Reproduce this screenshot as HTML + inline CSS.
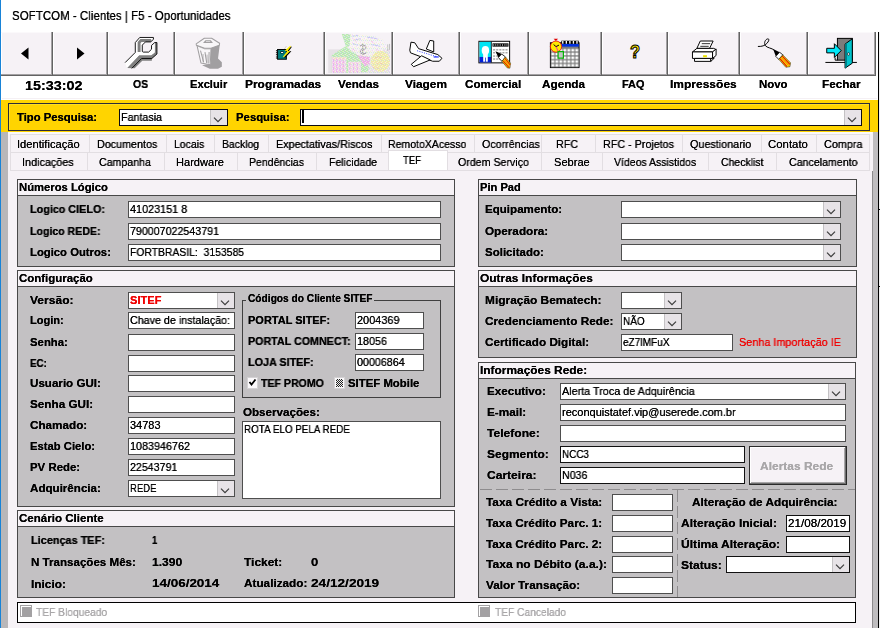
<!DOCTYPE html><html><head><meta charset="utf-8"><title>SOFTCOM</title><style>
html,body{margin:0;padding:0;background:#fff;}
body{width:880px;height:628px;position:relative;overflow:hidden;font-family:"Liberation Sans",sans-serif;}
div,svg,span{position:absolute;}
span{will-change:transform;text-shadow:0 0 0 currentColor;white-space:pre;line-height:14px;height:14px;transform-origin:0 50%;}
.b{font-weight:bold;}
</style></head><body>
<div style="left:0px;top:0px;width:1px;height:628px;background:#1883d7;"></div>
<div style="left:1px;top:32px;width:52px;height:44px;background:#f6f2f6;"></div>
<div style="left:1px;top:32px;width:1px;height:42px;background:#fff;"></div>
<div style="left:1px;top:32px;width:50px;height:1px;background:#fbf9fb;"></div>
<div style="left:51px;top:32px;width:1px;height:44px;background:#a3a1a3;"></div>
<div style="left:52px;top:32px;width:1px;height:44px;background:#636363;"></div>
<div style="left:1px;top:74px;width:51px;height:1px;background:#a3a1a3;"></div>
<div style="left:1px;top:75px;width:52px;height:1px;background:#636363;"></div>
<div style="left:53px;top:32px;width:55px;height:44px;background:#f6f2f6;"></div>
<div style="left:53px;top:32px;width:1px;height:42px;background:#fff;"></div>
<div style="left:53px;top:32px;width:53px;height:1px;background:#fbf9fb;"></div>
<div style="left:106px;top:32px;width:1px;height:44px;background:#a3a1a3;"></div>
<div style="left:107px;top:32px;width:1px;height:44px;background:#636363;"></div>
<div style="left:53px;top:74px;width:54px;height:1px;background:#a3a1a3;"></div>
<div style="left:53px;top:75px;width:55px;height:1px;background:#636363;"></div>
<div style="left:108px;top:32px;width:67px;height:44px;background:#f6f2f6;"></div>
<div style="left:108px;top:32px;width:1px;height:42px;background:#fff;"></div>
<div style="left:108px;top:32px;width:65px;height:1px;background:#fbf9fb;"></div>
<div style="left:173px;top:32px;width:1px;height:44px;background:#a3a1a3;"></div>
<div style="left:174px;top:32px;width:1px;height:44px;background:#636363;"></div>
<div style="left:108px;top:74px;width:66px;height:1px;background:#a3a1a3;"></div>
<div style="left:108px;top:75px;width:67px;height:1px;background:#636363;"></div>
<div style="left:175px;top:32px;width:69px;height:44px;background:#f6f2f6;"></div>
<div style="left:175px;top:32px;width:1px;height:42px;background:#fff;"></div>
<div style="left:175px;top:32px;width:67px;height:1px;background:#fbf9fb;"></div>
<div style="left:242px;top:32px;width:1px;height:44px;background:#a3a1a3;"></div>
<div style="left:243px;top:32px;width:1px;height:44px;background:#636363;"></div>
<div style="left:175px;top:74px;width:68px;height:1px;background:#a3a1a3;"></div>
<div style="left:175px;top:75px;width:69px;height:1px;background:#636363;"></div>
<div style="left:244px;top:32px;width:81px;height:44px;background:#f6f2f6;"></div>
<div style="left:244px;top:32px;width:1px;height:42px;background:#fff;"></div>
<div style="left:244px;top:32px;width:79px;height:1px;background:#fbf9fb;"></div>
<div style="left:323px;top:32px;width:1px;height:44px;background:#a3a1a3;"></div>
<div style="left:324px;top:32px;width:1px;height:44px;background:#636363;"></div>
<div style="left:244px;top:74px;width:80px;height:1px;background:#a3a1a3;"></div>
<div style="left:244px;top:75px;width:81px;height:1px;background:#636363;"></div>
<div style="left:325px;top:32px;width:68px;height:44px;background:#f6f2f6;"></div>
<div style="left:325px;top:32px;width:1px;height:42px;background:#fff;"></div>
<div style="left:325px;top:32px;width:66px;height:1px;background:#fbf9fb;"></div>
<div style="left:391px;top:32px;width:1px;height:44px;background:#a3a1a3;"></div>
<div style="left:392px;top:32px;width:1px;height:44px;background:#636363;"></div>
<div style="left:325px;top:74px;width:67px;height:1px;background:#a3a1a3;"></div>
<div style="left:325px;top:75px;width:68px;height:1px;background:#636363;"></div>
<div style="left:393px;top:32px;width:67px;height:44px;background:#f6f2f6;"></div>
<div style="left:393px;top:32px;width:1px;height:42px;background:#fff;"></div>
<div style="left:393px;top:32px;width:65px;height:1px;background:#fbf9fb;"></div>
<div style="left:458px;top:32px;width:1px;height:44px;background:#a3a1a3;"></div>
<div style="left:459px;top:32px;width:1px;height:44px;background:#636363;"></div>
<div style="left:393px;top:74px;width:66px;height:1px;background:#a3a1a3;"></div>
<div style="left:393px;top:75px;width:67px;height:1px;background:#636363;"></div>
<div style="left:460px;top:32px;width:69px;height:44px;background:#f6f2f6;"></div>
<div style="left:460px;top:32px;width:1px;height:42px;background:#fff;"></div>
<div style="left:460px;top:32px;width:67px;height:1px;background:#fbf9fb;"></div>
<div style="left:527px;top:32px;width:1px;height:44px;background:#a3a1a3;"></div>
<div style="left:528px;top:32px;width:1px;height:44px;background:#636363;"></div>
<div style="left:460px;top:74px;width:68px;height:1px;background:#a3a1a3;"></div>
<div style="left:460px;top:75px;width:69px;height:1px;background:#636363;"></div>
<div style="left:529px;top:32px;width:73px;height:44px;background:#f6f2f6;"></div>
<div style="left:529px;top:32px;width:1px;height:42px;background:#fff;"></div>
<div style="left:529px;top:32px;width:71px;height:1px;background:#fbf9fb;"></div>
<div style="left:600px;top:32px;width:1px;height:44px;background:#a3a1a3;"></div>
<div style="left:601px;top:32px;width:1px;height:44px;background:#636363;"></div>
<div style="left:529px;top:74px;width:72px;height:1px;background:#a3a1a3;"></div>
<div style="left:529px;top:75px;width:73px;height:1px;background:#636363;"></div>
<div style="left:602px;top:32px;width:66px;height:44px;background:#f6f2f6;"></div>
<div style="left:602px;top:32px;width:1px;height:42px;background:#fff;"></div>
<div style="left:602px;top:32px;width:64px;height:1px;background:#fbf9fb;"></div>
<div style="left:666px;top:32px;width:1px;height:44px;background:#a3a1a3;"></div>
<div style="left:667px;top:32px;width:1px;height:44px;background:#636363;"></div>
<div style="left:602px;top:74px;width:65px;height:1px;background:#a3a1a3;"></div>
<div style="left:602px;top:75px;width:66px;height:1px;background:#636363;"></div>
<div style="left:668px;top:32px;width:72px;height:44px;background:#f6f2f6;"></div>
<div style="left:668px;top:32px;width:1px;height:42px;background:#fff;"></div>
<div style="left:668px;top:32px;width:70px;height:1px;background:#fbf9fb;"></div>
<div style="left:738px;top:32px;width:1px;height:44px;background:#a3a1a3;"></div>
<div style="left:739px;top:32px;width:1px;height:44px;background:#636363;"></div>
<div style="left:668px;top:74px;width:71px;height:1px;background:#a3a1a3;"></div>
<div style="left:668px;top:75px;width:72px;height:1px;background:#636363;"></div>
<div style="left:740px;top:32px;width:68px;height:44px;background:#f6f2f6;"></div>
<div style="left:740px;top:32px;width:1px;height:42px;background:#fff;"></div>
<div style="left:740px;top:32px;width:66px;height:1px;background:#fbf9fb;"></div>
<div style="left:806px;top:32px;width:1px;height:44px;background:#a3a1a3;"></div>
<div style="left:807px;top:32px;width:1px;height:44px;background:#636363;"></div>
<div style="left:740px;top:74px;width:67px;height:1px;background:#a3a1a3;"></div>
<div style="left:740px;top:75px;width:68px;height:1px;background:#636363;"></div>
<div style="left:808px;top:32px;width:68px;height:44px;background:#f6f2f6;"></div>
<div style="left:808px;top:32px;width:1px;height:42px;background:#fff;"></div>
<div style="left:808px;top:32px;width:66px;height:1px;background:#fbf9fb;"></div>
<div style="left:874px;top:32px;width:1px;height:44px;background:#a3a1a3;"></div>
<div style="left:875px;top:32px;width:1px;height:44px;background:#636363;"></div>
<div style="left:808px;top:74px;width:67px;height:1px;background:#a3a1a3;"></div>
<div style="left:808px;top:75px;width:68px;height:1px;background:#636363;"></div>
<div style="left:878px;top:32px;width:1px;height:596px;background:#000;"></div>
<div style="left:879px;top:32px;width:1px;height:596px;background:#f0f0f0;"></div>
<div style="left:879px;top:209px;width:1px;height:1px;background:#000;"></div>
<div style="left:879px;top:286px;width:1px;height:1px;background:#000;"></div>
<div style="left:2px;top:98px;width:875px;height:1px;background:#f4f0f4;"></div>
<div style="left:1px;top:100px;width:877px;height:32px;background:#ffd400;"></div>
<div style="left:8px;top:103px;width:862px;height:28px;border:1px solid #2c2c38;box-sizing:border-box;"></div>
<div style="left:9px;top:104px;width:860px;height:1px;background:#ffdf20;"></div>
<div style="left:9px;top:104px;width:1px;height:26px;background:#ffdf20;"></div>
<div style="left:119px;top:109px;width:109px;height:17px;background:#fff;border:1px solid #0c0c14;box-sizing:border-box;"></div>
<div style="left:210px;top:110px;width:17px;height:15px;background:#e7e3e7;"></div>
<div style="left:210px;top:110px;width:1px;height:15px;background:#c4c2c4;"></div>
<svg style="left:210px;top:110px" width="17" height="15"><path d="M4 7.7 L8 11.7 L12 7.7" fill="none" stroke="#3c3c3c" stroke-width="1.2"/></svg>
<div style="left:300px;top:109px;width:562px;height:17px;background:#fff;border:1px solid #0c0c14;box-sizing:border-box;"></div>
<div style="left:844px;top:110px;width:17px;height:15px;background:#e7e3e7;"></div>
<div style="left:844px;top:110px;width:1px;height:15px;background:#c4c2c4;"></div>
<svg style="left:844px;top:110px" width="17" height="15"><path d="M4 7.7 L8 11.7 L12 7.7" fill="none" stroke="#3c3c3c" stroke-width="1.2"/></svg>
<div style="left:302px;top:110px;width:2px;height:13px;background:#000;"></div>
<div style="left:1px;top:132px;width:7px;height:496px;background:#b9b7b9;"></div>
<div style="left:8px;top:132px;width:865px;height:496px;background:#f6f2f6;"></div>
<div style="left:873px;top:132px;width:5px;height:496px;background:#bfbdbf;"></div>
<div style="left:872px;top:171px;width:1px;height:457px;background:#8c8a8c;"></div>
<div style="left:8px;top:132px;width:864px;height:2px;background:#fbfafb;"></div>
<div style="left:10px;top:134px;width:860px;height:1px;background:#e2dee2;"></div>
<div style="left:10px;top:152px;width:860px;height:1px;background:#e2dee2;"></div>
<div style="left:10px;top:170px;width:860px;height:1px;background:#e2dee2;"></div>
<div style="left:10px;top:134px;width:1px;height:18px;background:#e2dee2;"></div>
<div style="left:89px;top:134px;width:1px;height:18px;background:#e2dee2;"></div>
<div style="left:166px;top:134px;width:1px;height:18px;background:#e2dee2;"></div>
<div style="left:214px;top:134px;width:1px;height:18px;background:#e2dee2;"></div>
<div style="left:268px;top:134px;width:1px;height:18px;background:#e2dee2;"></div>
<div style="left:381px;top:134px;width:1px;height:18px;background:#e2dee2;"></div>
<div style="left:474px;top:134px;width:1px;height:18px;background:#e2dee2;"></div>
<div style="left:541px;top:134px;width:1px;height:18px;background:#e2dee2;"></div>
<div style="left:595px;top:134px;width:1px;height:18px;background:#e2dee2;"></div>
<div style="left:682px;top:134px;width:1px;height:18px;background:#e2dee2;"></div>
<div style="left:761px;top:134px;width:1px;height:18px;background:#e2dee2;"></div>
<div style="left:816px;top:134px;width:1px;height:18px;background:#e2dee2;"></div>
<div style="left:869px;top:134px;width:1px;height:18px;background:#e2dee2;"></div>
<div style="left:10px;top:152px;width:1px;height:18px;background:#e2dee2;"></div>
<div style="left:87px;top:152px;width:1px;height:18px;background:#e2dee2;"></div>
<div style="left:164px;top:152px;width:1px;height:18px;background:#e2dee2;"></div>
<div style="left:237px;top:152px;width:1px;height:18px;background:#e2dee2;"></div>
<div style="left:316px;top:152px;width:1px;height:18px;background:#e2dee2;"></div>
<div style="left:388px;top:152px;width:1px;height:18px;background:#e2dee2;"></div>
<div style="left:447px;top:152px;width:1px;height:18px;background:#e2dee2;"></div>
<div style="left:541px;top:152px;width:1px;height:18px;background:#e2dee2;"></div>
<div style="left:602px;top:152px;width:1px;height:18px;background:#e2dee2;"></div>
<div style="left:708px;top:152px;width:1px;height:18px;background:#e2dee2;"></div>
<div style="left:776px;top:152px;width:1px;height:18px;background:#e2dee2;"></div>
<div style="left:869px;top:152px;width:1px;height:18px;background:#e2dee2;"></div>
<div style="left:388px;top:150px;width:60px;height:20px;background:#fff;"></div>
<div style="left:388px;top:150px;width:1px;height:20px;background:#e2dee2;"></div>
<div style="left:447px;top:150px;width:1px;height:20px;background:#e2dee2;"></div>
<div style="left:388px;top:150px;width:60px;height:1px;background:#e2dee2;"></div>
<div style="left:17px;top:179px;width:438px;height:88px;background:#c3c1c3;border:1px solid #484848;box-sizing:border-box;"></div>
<div style="left:18px;top:180px;width:436px;height:15px;background:#f6f2f6;"></div>
<div style="left:17px;top:195px;width:438px;height:1px;background:#484848;"></div>
<div style="left:128px;top:201px;width:313px;height:17px;background:#fff;border:1px solid #4e4e4e;box-sizing:border-box;"></div>
<div style="left:128px;top:223px;width:313px;height:17px;background:#fff;border:1px solid #4e4e4e;box-sizing:border-box;"></div>
<div style="left:128px;top:244px;width:313px;height:17px;background:#fff;border:1px solid #4e4e4e;box-sizing:border-box;"></div>
<div style="left:478px;top:179px;width:379px;height:88px;background:#c3c1c3;border:1px solid #484848;box-sizing:border-box;"></div>
<div style="left:479px;top:180px;width:377px;height:15px;background:#f6f2f6;"></div>
<div style="left:478px;top:195px;width:379px;height:1px;background:#484848;"></div>
<div style="left:621px;top:201px;width:220px;height:17px;background:#fff;border:1px solid #4e4e4e;box-sizing:border-box;"></div>
<div style="left:823px;top:202px;width:17px;height:15px;background:#e7e3e7;"></div>
<div style="left:823px;top:202px;width:1px;height:15px;background:#c4c2c4;"></div>
<svg style="left:823px;top:202px" width="17" height="15"><path d="M4 7.7 L8 11.7 L12 7.7" fill="none" stroke="#3c3c3c" stroke-width="1.2"/></svg>
<div style="left:621px;top:223px;width:220px;height:17px;background:#fff;border:1px solid #4e4e4e;box-sizing:border-box;"></div>
<div style="left:823px;top:224px;width:17px;height:15px;background:#e7e3e7;"></div>
<div style="left:823px;top:224px;width:1px;height:15px;background:#c4c2c4;"></div>
<svg style="left:823px;top:224px" width="17" height="15"><path d="M4 7.7 L8 11.7 L12 7.7" fill="none" stroke="#3c3c3c" stroke-width="1.2"/></svg>
<div style="left:621px;top:244px;width:220px;height:17px;background:#fff;border:1px solid #4e4e4e;box-sizing:border-box;"></div>
<div style="left:823px;top:245px;width:17px;height:15px;background:#e7e3e7;"></div>
<div style="left:823px;top:245px;width:1px;height:15px;background:#c4c2c4;"></div>
<svg style="left:823px;top:245px" width="17" height="15"><path d="M4 7.7 L8 11.7 L12 7.7" fill="none" stroke="#3c3c3c" stroke-width="1.2"/></svg>
<div style="left:17px;top:270px;width:438px;height:237px;background:#c3c1c3;border:1px solid #484848;box-sizing:border-box;"></div>
<div style="left:18px;top:271px;width:436px;height:15px;background:#f6f2f6;"></div>
<div style="left:17px;top:286px;width:438px;height:1px;background:#484848;"></div>
<div style="left:128px;top:292px;width:107px;height:17px;background:#fff;border:1px solid #4e4e4e;box-sizing:border-box;"></div>
<div style="left:217px;top:293px;width:17px;height:15px;background:#e7e3e7;"></div>
<div style="left:217px;top:293px;width:1px;height:15px;background:#c4c2c4;"></div>
<svg style="left:217px;top:293px" width="17" height="15"><path d="M4 7.7 L8 11.7 L12 7.7" fill="none" stroke="#3c3c3c" stroke-width="1.2"/></svg>
<div style="left:128px;top:312px;width:107px;height:17px;background:#fff;border:1px solid #4e4e4e;box-sizing:border-box;"></div>
<div style="left:128px;top:334px;width:107px;height:17px;background:#fff;border:1px solid #4e4e4e;box-sizing:border-box;"></div>
<div style="left:128px;top:355px;width:107px;height:17px;background:#fff;border:1px solid #4e4e4e;box-sizing:border-box;"></div>
<div style="left:128px;top:375px;width:107px;height:17px;background:#fff;border:1px solid #4e4e4e;box-sizing:border-box;"></div>
<div style="left:128px;top:396px;width:107px;height:17px;background:#fff;border:1px solid #4e4e4e;box-sizing:border-box;"></div>
<div style="left:128px;top:417px;width:107px;height:17px;background:#fff;border:1px solid #4e4e4e;box-sizing:border-box;"></div>
<div style="left:128px;top:438px;width:107px;height:17px;background:#fff;border:1px solid #4e4e4e;box-sizing:border-box;"></div>
<div style="left:128px;top:459px;width:107px;height:17px;background:#fff;border:1px solid #4e4e4e;box-sizing:border-box;"></div>
<div style="left:128px;top:480px;width:107px;height:17px;background:#fff;border:1px solid #4e4e4e;box-sizing:border-box;"></div>
<div style="left:217px;top:481px;width:17px;height:15px;background:#e7e3e7;"></div>
<div style="left:217px;top:481px;width:1px;height:15px;background:#c4c2c4;"></div>
<svg style="left:217px;top:481px" width="17" height="15"><path d="M4 7.7 L8 11.7 L12 7.7" fill="none" stroke="#3c3c3c" stroke-width="1.2"/></svg>
<div style="left:242px;top:300px;width:199px;height:98px;border:1px solid #404040;box-sizing:border-box;"></div>
<div style="left:246px;top:296px;width:128px;height:8px;background:#c3c1c3;"></div>
<div style="left:355px;top:312px;width:69px;height:17px;background:#fff;border:1px solid #4e4e4e;box-sizing:border-box;"></div>
<div style="left:355px;top:333px;width:69px;height:17px;background:#fff;border:1px solid #4e4e4e;box-sizing:border-box;"></div>
<div style="left:355px;top:354px;width:69px;height:17px;background:#fff;border:1px solid #4e4e4e;box-sizing:border-box;"></div>
<div style="left:247px;top:377px;width:11px;height:12px;background:#fbf9fb;border:1px solid #d4d2d4;box-sizing:border-box;"></div>
<svg style="left:247px;top:377px" width="11" height="11"><path d="M2.5 5 L4.5 7.5 L8.5 2.5" fill="none" stroke="#000" stroke-width="1.8"/></svg>
<div style="left:334px;top:377px;width:11px;height:12px;background:#fbf9fb;border:1px solid #d4d2d4;box-sizing:border-box;"></div>
<div style="left:336px;top:379px;width:7px;height:8px;background:repeating-conic-gradient(#222 0 25%,#eee 0 50%) 0 0/2px 2px"></div>
<div style="left:242px;top:421px;width:199px;height:78px;background:#fff;border:1px solid #4e4e4e;box-sizing:border-box;"></div>
<div style="left:17px;top:510px;width:438px;height:88px;background:#c3c1c3;border:1px solid #484848;box-sizing:border-box;"></div>
<div style="left:18px;top:511px;width:436px;height:15px;background:#f6f2f6;"></div>
<div style="left:17px;top:526px;width:438px;height:1px;background:#484848;"></div>
<div style="left:17px;top:602px;width:839px;height:21px;background:#fff;border:1px solid #000;box-sizing:border-box;"></div>
<div style="left:20px;top:605px;width:12px;height:12px;background:#a3a1a3;"></div>
<div style="left:21px;top:606px;width:10px;height:1px;background:#fff;"></div>
<div style="left:21px;top:606px;width:1px;height:10px;background:#fff;"></div>
<div style="left:478px;top:605px;width:12px;height:12px;background:#a3a1a3;"></div>
<div style="left:479px;top:606px;width:10px;height:1px;background:#fff;"></div>
<div style="left:479px;top:606px;width:1px;height:10px;background:#fff;"></div>
<div style="left:478px;top:270px;width:379px;height:88px;background:#c3c1c3;border:1px solid #484848;box-sizing:border-box;"></div>
<div style="left:479px;top:271px;width:377px;height:15px;background:#f6f2f6;"></div>
<div style="left:478px;top:286px;width:379px;height:1px;background:#484848;"></div>
<div style="left:621px;top:292px;width:61px;height:17px;background:#fff;border:1px solid #4e4e4e;box-sizing:border-box;"></div>
<div style="left:664px;top:293px;width:17px;height:15px;background:#e7e3e7;"></div>
<div style="left:664px;top:293px;width:1px;height:15px;background:#c4c2c4;"></div>
<svg style="left:664px;top:293px" width="17" height="15"><path d="M4 7.7 L8 11.7 L12 7.7" fill="none" stroke="#3c3c3c" stroke-width="1.2"/></svg>
<div style="left:621px;top:313px;width:61px;height:17px;background:#fff;border:1px solid #4e4e4e;box-sizing:border-box;"></div>
<div style="left:664px;top:314px;width:17px;height:15px;background:#e7e3e7;"></div>
<div style="left:664px;top:314px;width:1px;height:15px;background:#c4c2c4;"></div>
<svg style="left:664px;top:314px" width="17" height="15"><path d="M4 7.7 L8 11.7 L12 7.7" fill="none" stroke="#3c3c3c" stroke-width="1.2"/></svg>
<div style="left:621px;top:334px;width:112px;height:17px;background:#fff;border:1px solid #4e4e4e;box-sizing:border-box;"></div>
<div style="left:478px;top:362px;width:378px;height:236px;background:#c3c1c3;border:1px solid #484848;box-sizing:border-box;"></div>
<div style="left:479px;top:363px;width:376px;height:15px;background:#f6f2f6;"></div>
<div style="left:478px;top:378px;width:378px;height:1px;background:#484848;"></div>
<div style="left:560px;top:383px;width:286px;height:17px;background:#fff;border:1px solid #4e4e4e;box-sizing:border-box;"></div>
<div style="left:828px;top:384px;width:17px;height:15px;background:#e7e3e7;"></div>
<div style="left:828px;top:384px;width:1px;height:15px;background:#c4c2c4;"></div>
<svg style="left:828px;top:384px" width="17" height="15"><path d="M4 7.7 L8 11.7 L12 7.7" fill="none" stroke="#3c3c3c" stroke-width="1.2"/></svg>
<div style="left:560px;top:404px;width:286px;height:17px;background:#fff;border:1px solid #4e4e4e;box-sizing:border-box;"></div>
<div style="left:560px;top:425px;width:286px;height:17px;background:#fff;border:1px solid #4e4e4e;box-sizing:border-box;"></div>
<div style="left:560px;top:446px;width:185px;height:17px;background:#fff;border:1px solid #111;box-sizing:border-box;"></div>
<div style="left:560px;top:467px;width:185px;height:17px;background:#fff;border:1px solid #111;box-sizing:border-box;"></div>
<div style="left:749px;top:446px;width:98px;height:39px;background:#f6f2f6;border:1px solid #2a2a2a;box-sizing:border-box;"></div>
<div style="left:750px;top:447px;width:96px;height:1px;background:#fff;"></div>
<div style="left:750px;top:447px;width:1px;height:37px;background:#fff;"></div>
<div style="left:750px;top:483px;width:96px;height:1px;background:#6e6e6e;"></div>
<div style="left:845px;top:447px;width:1px;height:37px;background:#6e6e6e;"></div>
<div style="left:751px;top:482px;width:94px;height:1px;background:#a8a6a8;"></div>
<div style="left:844px;top:448px;width:1px;height:35px;background:#a8a6a8;"></div>
<div style="left:480px;top:489px;width:375px;background:repeating-linear-gradient(90deg,#8e8c8e 0 12px,transparent 12px 16px);height:1px"></div>
<div style="left:677px;top:490px;width:1px;height:107px;background:repeating-linear-gradient(180deg,#8e8c8e 0 12px,transparent 12px 16px)"></div>
<div style="left:612px;top:494px;width:61px;height:17px;background:#fff;border:1px solid #4e4e4e;box-sizing:border-box;"></div>
<div style="left:612px;top:515px;width:61px;height:17px;background:#fff;border:1px solid #4e4e4e;box-sizing:border-box;"></div>
<div style="left:612px;top:536px;width:61px;height:17px;background:#fff;border:1px solid #4e4e4e;box-sizing:border-box;"></div>
<div style="left:612px;top:556px;width:61px;height:17px;background:#fff;border:1px solid #4e4e4e;box-sizing:border-box;"></div>
<div style="left:612px;top:577px;width:61px;height:17px;background:#fff;border:1px solid #4e4e4e;box-sizing:border-box;"></div>
<div style="left:786px;top:515px;width:64px;height:17px;background:#fff;border:1px solid #111;box-sizing:border-box;"></div>
<div style="left:786px;top:536px;width:64px;height:17px;background:#fff;border:1px solid #111;box-sizing:border-box;"></div>
<div style="left:726px;top:556px;width:124px;height:17px;background:#fff;border:1px solid #111;box-sizing:border-box;"></div>
<div style="left:832px;top:557px;width:17px;height:15px;background:#e7e3e7;"></div>
<div style="left:832px;top:557px;width:1px;height:15px;background:#c4c2c4;"></div>
<svg style="left:832px;top:557px" width="17" height="15"><path d="M4 7.7 L8 11.7 L12 7.7" fill="none" stroke="#3c3c3c" stroke-width="1.2"/></svg>
<svg style="left:0;top:32px" width="110" height="44" viewBox="0 0 110 44"><path d="M21 21.5 L28.5 15.5 L28.5 27.5 Z" fill="#000"/><path d="M84.5 21.5 L77 15.5 L77 27.5 Z" fill="#000"/></svg>
<svg style="left:120px;top:33px" width="44" height="40" viewBox="0 0 691 628" >
<path d="M545 150 L580 150 L580 330 L500 400 L500 435 L350 435 L230 555 L110 550 L300 345 L480 345 L545 300 Z" fill="#808080"/>
<path d="M310 70 L525 70 L525 100 L480 140 L400 140 L350 190 L350 290 L365 300 L450 300 L495 255 L495 195 L545 150 L545 310 L490 350 L300 350 L110 548 L78 468 L240 305 L240 150 Z" fill="#fff"/>
<path d="M300 300 L300 150 L330 118 L490 118" stroke="#808080" stroke-width="46" fill="none"/>
<path d="M310 350 L120 548" stroke="#808080" stroke-width="0" fill="none"/>
<path d="M80 465 L240 305 L240 150 L310 70 L525 70 L525 100 L480 140 L400 140 L350 190 L350 290 L365 300 L450 300 L495 255 L495 195 L545 150 L580 150 L580 330 L500 400 L340 400 L185 555" stroke="#000" stroke-width="14" fill="none" stroke-linejoin="miter"/>
</svg>
<svg style="left:190px;top:33px" width="44" height="40" viewBox="0 0 691 628" >
<path d="M330 200 L470 165 L440 400 L500 460 L500 530 L440 562 L310 562 L190 505 L330 480 Z" fill="#a19fa1"/>
<path d="M108 185 L330 235 L318 500 L172 470 Z" fill="#f8f6f8" stroke="#a19fa1" stroke-width="16" stroke-linejoin="round"/>
<path d="M165 275 L215 460 M235 300 L262 470 M300 300 L295 480" stroke="#a19fa1" stroke-width="16" fill="none"/>
<path d="M205 330 L205 450 M268 340 L268 470" stroke="#a19fa1" stroke-width="12" fill="none"/>
<path d="M97 172 L225 82 L340 82 L465 160 L460 192 L330 240 L230 240 L100 192 Z" fill="#f8f6f8" stroke="#a19fa1" stroke-width="16" stroke-linejoin="round"/>
<path d="M120 205 L230 250 L320 250" stroke="#a19fa1" stroke-width="10" fill="none"/>
<path d="M205 158 L242 114 L328 114 L360 158 Z" fill="#a19fa1"/>
<path d="M250 134 L318 134" stroke="#f8f6f8" stroke-width="10"/>
</svg>
<svg style="left:270px;top:40px" width="28" height="24" viewBox="0 0 733 628" >
<rect x="150" y="225" width="300" height="300" fill="#fff" opacity="0.8"/>
<rect x="198" y="248" width="230" height="255" fill="#008080" stroke="#000" stroke-width="26"/>
<path d="M170 270 L170 500" stroke="#000" stroke-width="30" stroke-dasharray="26 27"/>
<rect x="275" y="300" width="80" height="50" fill="#000"/><rect x="290" y="314" width="55" height="26" fill="#fff"/>
<path d="M555 170 L420 290 L490 300 L370 460 L400 465 L560 295 L495 290 L570 185 Z" fill="#000"/>
<path d="M530 152 L385 282 L455 290 L338 438 L362 450 L530 290 L462 286 L548 172 Z" fill="#ffee00"/>
<path d="M430 160 L370 240" stroke="#888" stroke-width="8"/>
</svg>
<svg style="left:320px;top:28px" width="80" height="52" viewBox="0 0 880 572" >
<defs><pattern id="vn" width="44" height="44" patternUnits="userSpaceOnUse">
<rect x="0" y="0" width="11" height="11" fill="#f6f2f6"/><rect x="22" y="11" width="11" height="11" fill="#f6f2f6"/><rect x="11" y="22" width="11" height="11" fill="#fff"/><rect x="33" y="33" width="11" height="11" fill="#f6f2f6"/>
<rect x="33" y="0" width="11" height="11" fill="#c8f4c0"/><rect x="0" y="22" width="11" height="11" fill="#f8c8f0"/><rect x="22" y="33" width="11" height="11" fill="#f8f4b0"/><rect x="11" y="0" width="11" height="11" fill="#c8ccf8"/>
</pattern>
<clipPath id="vc"><path d="M240 65 L335 65 L600 90 L690 130 L770 260 L770 495 L130 495 L130 300 L285 200 Z"/></clipPath></defs>
<rect x="90" y="235" width="680" height="260" fill="#e6e2e6"/>
<g opacity="0.72">
<path d="M240 65 L335 65 L335 210 L285 200 Z" fill="#9ee89a"/>
<path d="M130 300 L290 195 L340 250 L470 330 L540 440 L520 480 L300 495 L130 495 Z" fill="#a6eca0"/>
<path d="M340 68 L600 90 L690 130 L690 250 L620 330 L420 300 L320 230 Z" fill="#f8f6f4"/>
<path d="M350 90 L420 80 M380 130 L450 120 M520 100 L640 120 M560 180 L660 200 M360 170 L420 190" stroke="#b4b8f4" stroke-width="12" fill="none"/>
<path d="M470 170 L470 290 M440 200 Q470 170 500 200 Q520 230 470 235 Q430 245 450 275 Q480 300 510 270" stroke="#8c8c8c" stroke-width="14" fill="none"/>
<path d="M360 110 L400 150 M560 140 L600 170 M620 230 L650 260 M350 220 L380 250" stroke="#f4a0e0" stroke-width="10" fill="none"/>
<path d="M410 298 L545 318 L545 400 L490 420 Z" fill="#f49ae6"/>
<rect x="130" y="320" width="160" height="175" fill="#f6d8ee"/>
<path d="M150 330 L150 495 M185 330 L185 495 M220 330 L220 495 M255 330 L255 495" stroke="#f49aec" stroke-width="16"/>
<path d="M135 330 L290 330" stroke="#f4f09a" stroke-width="12"/>
<rect x="310" y="370" width="140" height="125" fill="#f6e0e8"/>
<path d="M330 380 L330 495 M370 380 L370 495 M410 380 L410 495" stroke="#f4a4ec" stroke-width="14"/>
<ellipse cx="665" cy="365" rx="105" ry="115" fill="#f6f08e"/>
<path d="M600 330 Q640 300 680 330 M620 400 Q660 370 720 410 M580 430 Q620 450 660 440" stroke="#f4c08c" stroke-width="10" fill="none"/>
<path d="M745 180 L745 250 M765 175 L765 240" stroke="#a8a8a8" stroke-width="10"/>
</g>
<rect x="90" y="60" width="680" height="435" fill="url(#vn)" opacity="0.55" clip-path="url(#vc)"/>
</svg>
<svg style="left:395px;top:28px" width="130" height="52" viewBox="0 0 880 352" >
<g stroke="#000" stroke-width="6.6" stroke-linejoin="round" fill="#fff">
<path d="M212 142 L236 84 L262 88 L262 162 Z"/>
<path d="M100 150 L108 96 L134 100 L160 140 L290 180 L318 205 L300 225 L255 225 L105 168 Z"/>
<path d="M180 188 L110 246 L126 262 L238 216 Z"/>
</g>
<path d="M150 154 L288 196" stroke="#2030ff" stroke-width="6" stroke-dasharray="7 9"/>
<path d="M262 196 L296 196" stroke="#2030ff" stroke-width="8"/>
<rect x="568" y="90" width="208" height="146" fill="#fff" stroke="#000" stroke-width="6.6"/>
<rect x="572" y="94" width="80" height="104" fill="#00e4f4"/>
<rect x="572" y="196" width="80" height="37" fill="#0020d8"/>
<ellipse cx="612" cy="152" rx="25" ry="30" fill="#fff"/>
<rect x="597" y="176" width="31" height="52" fill="#fff"/>
<rect x="610" y="200" width="5" height="30" fill="#0020d8"/>
<path d="M652 92 L652 234" stroke="#000" stroke-width="5.5"/>
<rect x="660" y="104" width="108" height="22" fill="#000"/>
<path d="M668 110 L668 120 M682 110 L682 120 M696 110 L696 120 M712 110 L712 120 M728 110 L728 120 M744 110 L744 120 M758 110 L758 120" stroke="#fff" stroke-width="5"/>
<path d="M664 148 L768 148 M664 168 L768 168 M664 190 L720 190 M664 210 L720 210" stroke="#505050" stroke-width="5" stroke-dasharray="14 7"/>
<path d="M680 158 L722 176 L700 200 Z" fill="#000"/>
<path d="M700 200 L722 176 L748 196 L724 226 Z" fill="#fff" stroke="#000" stroke-width="5.5"/>
<path d="M724 226 L748 196 L782 238 L778 272 L760 270 Z" fill="#ffe000" stroke="#000" stroke-width="3"/>
<path d="M732 222 L772 268 M744 206 L780 250" stroke="#e02000" stroke-width="7"/>
<path d="M738 214 L776 260" stroke="#f08000" stroke-width="6"/>
</svg>
<svg style="left:530px;top:28px" width="130" height="52" viewBox="0 0 880 352" >
<defs><pattern id="cg" x="141" y="138" width="27" height="25.5" patternUnits="userSpaceOnUse"><rect width="27" height="25.5" fill="#7c7c7c"/><rect x="4" y="4" width="19" height="17" fill="#fff"/></pattern></defs>
<rect x="138" y="100" width="194" height="168" fill="#7c7c7c" stroke="#000" stroke-width="6.6"/>
<rect x="141" y="138" width="189" height="127.5" fill="url(#cg)"/>
<rect x="212" y="86" width="118" height="22" fill="#000"/>
<path d="M222 88 L222 106 M246 88 L246 106 M270 88 L270 106 M294 88 L294 106 M318 88 L318 106" stroke="#fff" stroke-width="9"/>
<rect x="212" y="108" width="118" height="18" fill="#0030e0"/>
<path d="M160 72 L190 72 L175 88 Z" fill="#e00000"/>
<circle cx="176" cy="126" r="38" fill="#ffe800" stroke="#e81010" stroke-width="6"/>
<path d="M176 126 L160 112 M176 126 L196 116" stroke="#000" stroke-width="6.6"/>
<path d="M176 126 L190 156" stroke="#f020c0" stroke-width="6"/>
<rect x="190" y="160" width="36" height="44" fill="#c4c4c4" stroke="#00b400" stroke-width="8"/>
<text x="677" y="204" font-family="Liberation Sans" font-weight="bold" font-size="118" fill="#ffe800" stroke="#000" stroke-width="7" textLength="68" lengthAdjust="spacingAndGlyphs">?</text>
</svg>
<svg style="left:670px;top:28px" width="130" height="52" viewBox="0 0 880 352" >
<g stroke="#000" stroke-width="6.6" stroke-linejoin="round" fill="#fff">
<path d="M205 88 L292 88 L268 138 L182 138 Z"/>
<path d="M152 162 L182 138 L296 138 L312 146 L288 162 Z"/>
<path d="M288 162 L312 142 L312 186 L288 206 Z"/>
<rect x="152" y="162" width="136" height="44"/>
<path d="M166 206 L276 206 L276 226 L166 226 Z"/>
<path d="M276 226 L300 204 L288 206 L276 206 Z"/>
</g>
<path d="M215 106 L272 106 M205 124 L262 124" stroke="#000" stroke-width="5.5"/>
<rect x="224" y="184" width="26" height="14" fill="#e8e000"/>
<path d="M595 125 C622 126 642 120 656 104 C672 86 674 72 660 74 C644 78 634 102 646 120 C656 134 690 136 706 150" stroke="#000" stroke-width="6.6" fill="none"/>
<path d="M698 142 L742 164 L716 192 Z" fill="#000"/>
<path d="M716 192 L742 164 L764 182 L736 212 Z" fill="#fff" stroke="#000" stroke-width="5.5"/>
<path d="M736 212 L764 182 L816 236 L812 262 L784 266 Z" fill="#ffe000" stroke="#000" stroke-width="3"/>
<path d="M744 208 L792 262 M760 190 L812 246" stroke="#e01800" stroke-width="8"/>
<path d="M752 198 L804 254" stroke="#f08000" stroke-width="7"/>
</svg>
<svg style="left:800px;top:20px" width="80" height="120" viewBox="0 0 419 628" >
<rect x="196" y="96" width="78" height="114" fill="#7c7c7c" stroke="#000" stroke-width="5.2"/>
<path d="M236 126 L274 98 L274 226 L236 252 Z" fill="#00c4cc" stroke="#000" stroke-width="5.2"/>
<path d="M236 126 L246 120 L246 246 L236 252 Z" fill="#008088"/>
<ellipse cx="254" cy="178" rx="5" ry="8" fill="#fff" stroke="#000" stroke-width="3"/>
<path d="M140 148 L180 148 L180 124 L216 160 L180 196 L180 172 L140 172 Z" fill="#00e8f8" stroke="#000" stroke-width="5.2"/>
<path d="M133 222 L236 222 M274 222 L298 222 M184 196 L184 210 L196 210" stroke="#000" stroke-width="5.2" fill="none"/>
</svg>
<span style="left:11.5px;top:8.8px;font-size:13px;color:#000;transform:scaleX(0.8878);">SOFTCOM - Clientes | F5 - Oportunidades</span>
<span class="b" style="left:25.0px;top:78.9px;font-size:13px;color:#000;transform:scaleX(1.1048);">15:33:02</span>
<span class="b" style="left:133.2px;top:76.7px;font-size:11px;color:#000;transform:scaleX(0.9587);">OS</span>
<span class="b" style="left:190.0px;top:76.7px;font-size:11px;color:#000;transform:scaleX(1.0153);">Excluir</span>
<span class="b" style="left:245.2px;top:76.7px;font-size:11px;color:#000;transform:scaleX(1.0844);">Programadas</span>
<span class="b" style="left:337.5px;top:76.7px;font-size:11px;color:#000;transform:scaleX(1.0641);">Vendas</span>
<span class="b" style="left:404.5px;top:76.7px;font-size:11px;color:#000;transform:scaleX(1.0787);">Viagem</span>
<span class="b" style="left:465.2px;top:76.7px;font-size:11px;color:#000;transform:scaleX(1.0573);">Comercial</span>
<span class="b" style="left:541.5px;top:76.7px;font-size:11px;color:#000;transform:scaleX(1.0658);">Agenda</span>
<span class="b" style="left:622.0px;top:76.7px;font-size:11px;color:#000;transform:scaleX(0.9945);">FAQ</span>
<span class="b" style="left:669.5px;top:76.7px;font-size:11px;color:#000;transform:scaleX(1.0915);">Impressões</span>
<span class="b" style="left:759.0px;top:76.7px;font-size:11px;color:#000;transform:scaleX(1.0364);">Novo</span>
<span class="b" style="left:822.0px;top:76.7px;font-size:11px;color:#000;transform:scaleX(1.0671);">Fechar</span>
<span class="b" style="left:16.8px;top:110.0px;font-size:11px;color:#000;transform:scaleX(1.0263);">Tipo Pesquisa:</span>
<span class="b" style="left:235.9px;top:110.0px;font-size:11px;color:#000;transform:scaleX(1.0314);">Pesquisa:</span>
<span style="left:120.5px;top:110.2px;font-size:11px;color:#000;transform:scaleX(0.9715);">Fantasia</span>
<span style="left:17.2px;top:136.7px;font-size:11px;color:#000;transform:scaleX(1.0151);">Identificação</span>
<span style="left:96.7px;top:136.7px;font-size:11px;color:#000;transform:scaleX(0.9763);">Documentos</span>
<span style="left:173.7px;top:136.7px;font-size:11px;color:#000;transform:scaleX(0.9529);">Locais</span>
<span style="left:221.8px;top:136.7px;font-size:11px;color:#000;transform:scaleX(0.9479);">Backlog</span>
<span style="left:275.5px;top:136.7px;font-size:11px;color:#000;transform:scaleX(0.9793);">Expectativas/Riscos</span>
<span style="left:387.9px;top:136.7px;font-size:11px;color:#000;transform:scaleX(0.9568);">RemotoXAcesso</span>
<span style="left:481.7px;top:136.7px;font-size:11px;color:#000;transform:scaleX(0.9748);">Ocorrências</span>
<span style="left:555.5px;top:136.7px;font-size:11px;color:#000;transform:scaleX(0.9730);">RFC</span>
<span style="left:602.5px;top:136.7px;font-size:11px;color:#000;transform:scaleX(0.9759);">RFC - Projetos</span>
<span style="left:690.3px;top:136.7px;font-size:11px;color:#000;transform:scaleX(0.9812);">Questionario</span>
<span style="left:768.0px;top:136.7px;font-size:11px;color:#000;transform:scaleX(1.0355);">Contato</span>
<span style="left:824.0px;top:136.7px;font-size:11px;color:#000;transform:scaleX(0.9840);">Compra</span>
<span style="left:22.0px;top:154.7px;font-size:11px;color:#000;transform:scaleX(0.9849);">Indicações</span>
<span style="left:99.0px;top:154.7px;font-size:11px;color:#000;transform:scaleX(0.9642);">Campanha</span>
<span style="left:175.8px;top:154.7px;font-size:11px;color:#000;transform:scaleX(1.0066);">Hardware</span>
<span style="left:248.7px;top:154.7px;font-size:11px;color:#000;transform:scaleX(0.9565);">Pendências</span>
<span style="left:328.9px;top:154.7px;font-size:11px;color:#000;transform:scaleX(0.9593);">Felicidade</span>
<span style="left:457.8px;top:154.7px;font-size:11px;color:#000;transform:scaleX(0.9665);">Ordem Serviço</span>
<span style="left:554.0px;top:154.7px;font-size:11px;color:#000;transform:scaleX(1.0061);">Sebrae</span>
<span style="left:613.5px;top:154.7px;font-size:11px;color:#000;transform:scaleX(0.9534);">Vídeos Assistidos</span>
<span style="left:721.0px;top:154.7px;font-size:11px;color:#000;transform:scaleX(0.9524);">Checklist</span>
<span style="left:788.8px;top:154.7px;font-size:11px;color:#000;transform:scaleX(0.9656);">Cancelamento</span>
<span style="left:402.9px;top:152.7px;font-size:11px;color:#000;transform:scaleX(0.8710);">TEF</span>
<span class="b" style="left:18.7px;top:180.0px;font-size:11px;color:#000;transform:scaleX(1.0231);">Números Lógico</span>
<span class="b" style="left:30.0px;top:202.2px;font-size:11px;color:#000;transform:scaleX(0.9805);">Logico CIELO:</span>
<span style="left:129.5px;top:202.2px;font-size:11px;color:#000;transform:scaleX(0.9858);">41023151 8</span>
<span class="b" style="left:30.0px;top:224.2px;font-size:11px;color:#000;transform:scaleX(0.9612);">Logico REDE:</span>
<span style="left:129.5px;top:224.2px;font-size:11px;color:#000;transform:scaleX(0.9699);">790007022543791</span>
<span class="b" style="left:30.0px;top:245.2px;font-size:11px;color:#000;transform:scaleX(1.0263);">Logico Outros:</span>
<span style="left:129.5px;top:245.2px;font-size:11px;color:#000;transform:scaleX(0.9431);">FORTBRASIL:  3153585</span>
<span class="b" style="left:479.7px;top:180.0px;font-size:11px;color:#000;transform:scaleX(1.0113);">Pin Pad</span>
<span class="b" style="left:485.3px;top:202.2px;font-size:11px;color:#000;transform:scaleX(1.0526);">Equipamento:</span>
<span class="b" style="left:485.3px;top:224.2px;font-size:11px;color:#000;transform:scaleX(1.0658);">Operadora:</span>
<span class="b" style="left:485.3px;top:245.2px;font-size:11px;color:#000;transform:scaleX(1.0456);">Solicitado:</span>
<span class="b" style="left:18.7px;top:271.0px;font-size:11px;color:#000;transform:scaleX(1.0408);">Configuração</span>
<span class="b" style="left:30.0px;top:293.2px;font-size:11px;color:#000;transform:scaleX(1.0943);">Versão:</span>
<span class="b" style="left:129.5px;top:293.2px;font-size:11px;color:#f00000;transform:scaleX(1.0073);">SITEF</span>
<span class="b" style="left:30.0px;top:313.2px;font-size:11px;color:#000;transform:scaleX(1.0057);">Login:</span>
<span style="left:129.5px;top:313.2px;font-size:11px;color:#000;transform:scaleX(0.9734);">Chave de instalação:</span>
<span class="b" style="left:30.0px;top:335.2px;font-size:11px;color:#000;transform:scaleX(1.0330);">Senha:</span>
<span class="b" style="left:30.0px;top:356.2px;font-size:11px;color:#000;transform:scaleX(0.8917);">EC:</span>
<span class="b" style="left:30.0px;top:376.2px;font-size:11px;color:#000;transform:scaleX(1.0545);">Usuario GUI:</span>
<span class="b" style="left:30.0px;top:397.2px;font-size:11px;color:#000;transform:scaleX(1.0658);">Senha GUI:</span>
<span class="b" style="left:30.0px;top:418.2px;font-size:11px;color:#000;transform:scaleX(1.0636);">Chamado:</span>
<span style="left:129.5px;top:418.2px;font-size:11px;color:#000;transform:scaleX(0.9969);">34783</span>
<span class="b" style="left:30.0px;top:439.2px;font-size:11px;color:#000;transform:scaleX(1.0239);">Estab Cielo:</span>
<span style="left:129.5px;top:439.2px;font-size:11px;color:#000;transform:scaleX(0.9806);">1083946762</span>
<span class="b" style="left:30.0px;top:460.2px;font-size:11px;color:#000;transform:scaleX(1.0373);">PV Rede:</span>
<span style="left:129.5px;top:460.2px;font-size:11px;color:#000;transform:scaleX(0.9683);">22543791</span>
<span class="b" style="left:30.0px;top:481.2px;font-size:11px;color:#000;transform:scaleX(1.0545);">Adquirência:</span>
<span style="left:129.5px;top:481.2px;font-size:11px;color:#000;transform:scaleX(0.8638);">REDE</span>
<span class="b" style="left:248.0px;top:292.2px;font-size:10px;color:#000;transform:scaleX(1.0185);">Códigos do Cliente SITEF</span>
<span class="b" style="left:248.0px;top:313.1px;font-size:11px;color:#000;transform:scaleX(0.9989);">PORTAL SITEF:</span>
<span style="left:356.5px;top:313.2px;font-size:11px;color:#000;transform:scaleX(0.9923);">2004369</span>
<span class="b" style="left:248.0px;top:334.1px;font-size:11px;color:#000;transform:scaleX(0.9733);">PORTAL COMNECT:</span>
<span style="left:356.5px;top:334.2px;font-size:11px;color:#000;transform:scaleX(0.9806);">18056</span>
<span class="b" style="left:248.0px;top:355.1px;font-size:11px;color:#000;transform:scaleX(0.9801);">LOJA SITEF:</span>
<span style="left:356.5px;top:355.2px;font-size:11px;color:#000;transform:scaleX(0.9744);">00006864</span>
<span class="b" style="left:260.9px;top:375.7px;font-size:11px;color:#000;transform:scaleX(0.9619);">TEF PROMO</span>
<span class="b" style="left:348.1px;top:375.7px;font-size:11px;color:#000;transform:scaleX(1.0338);">SITEF Mobile</span>
<span class="b" style="left:243.1px;top:405.3px;font-size:11px;color:#000;transform:scaleX(1.0554);">Observações:</span>
<span style="left:243.5px;top:421.7px;font-size:11px;color:#000;transform:scaleX(0.8952);">ROTA ELO PELA REDE</span>
<span class="b" style="left:18.7px;top:511.0px;font-size:11px;color:#000;transform:scaleX(1.0510);">Cenário Cliente</span>
<span class="b" style="left:31.1px;top:533.1px;font-size:11px;color:#000;transform:scaleX(0.9896);">Licenças TEF:</span>
<span class="b" style="left:152.2px;top:533.1px;font-size:11px;color:#000;transform:scaleX(0.8653);">1</span>
<span class="b" style="left:31.1px;top:554.7px;font-size:11px;color:#000;transform:scaleX(1.0526);">N Transações Mês:</span>
<span class="b" style="left:152.2px;top:554.7px;font-size:11px;color:#000;transform:scaleX(1.1006);">1.390</span>
<span class="b" style="left:31.1px;top:577.1px;font-size:11px;color:#000;transform:scaleX(1.0775);">Inicio:</span>
<span class="b" style="left:152.2px;top:576.4px;font-size:11px;color:#000;transform:scaleX(1.2222);">14/06/2014</span>
<span class="b" style="left:243.5px;top:554.7px;font-size:11px;color:#000;transform:scaleX(1.0860);">Ticket:</span>
<span class="b" style="left:311.3px;top:554.7px;font-size:11px;color:#000;transform:scaleX(1.1755);">0</span>
<span class="b" style="left:243.5px;top:576.4px;font-size:11px;color:#000;transform:scaleX(1.0695);">Atualizado:</span>
<span class="b" style="left:311.3px;top:576.4px;font-size:11px;color:#000;transform:scaleX(1.2386);">24/12/2019</span>
<span style="left:36.3px;top:604.5px;font-size:11px;color:#a9a7a9;transform:scaleX(0.9315);">TEF Bloqueado</span>
<span style="left:494.5px;top:605.0px;font-size:11px;color:#a9a7a9;transform:scaleX(0.9289);">TEF Cancelado</span>
<span class="b" style="left:479.7px;top:271.0px;font-size:11px;color:#000;transform:scaleX(1.0854);">Outras Informações</span>
<span class="b" style="left:485.0px;top:293.1px;font-size:11px;color:#000;transform:scaleX(1.0828);">Migração Bematech:</span>
<span class="b" style="left:485.0px;top:314.1px;font-size:11px;color:#000;transform:scaleX(1.0725);">Credenciamento Rede:</span>
<span style="left:622.5px;top:314.2px;font-size:11px;color:#000;transform:scaleX(0.9101);">NÃO</span>
<span class="b" style="left:485.0px;top:334.5px;font-size:11px;color:#000;transform:scaleX(1.0645);">Certificado Digital:</span>
<span style="left:622.5px;top:335.2px;font-size:11px;color:#000;transform:scaleX(0.9163);">eZ7lMFuX</span>
<span style="left:739.0px;top:335.2px;font-size:11px;color:#f00000;transform:scaleX(0.9860);">Senha Importação IE</span>
<span class="b" style="left:479.7px;top:363.0px;font-size:11px;color:#000;transform:scaleX(1.0825);">Informações Rede:</span>
<span class="b" style="left:487.2px;top:383.7px;font-size:11px;color:#000;transform:scaleX(1.0568);">Executivo:</span>
<span style="left:561.5px;top:384.2px;font-size:11px;color:#000;transform:scaleX(0.9819);">Alerta Troca de Adquirência</span>
<span class="b" style="left:487.2px;top:405.0px;font-size:11px;color:#000;transform:scaleX(1.0712);">E-mail:</span>
<span style="left:561.5px;top:405.2px;font-size:11px;color:#000;transform:scaleX(0.9988);">reconquistatef.vip@userede.com.br</span>
<span class="b" style="left:487.2px;top:425.7px;font-size:11px;color:#000;transform:scaleX(1.0982);">Telefone:</span>
<span class="b" style="left:487.2px;top:447.2px;font-size:11px;color:#000;transform:scaleX(1.0872);">Segmento:</span>
<span style="left:561.5px;top:447.2px;font-size:11px;color:#000;transform:scaleX(0.9014);">NCC3</span>
<span class="b" style="left:487.2px;top:468.2px;font-size:11px;color:#000;transform:scaleX(1.0961);">Carteira:</span>
<span style="left:561.5px;top:468.2px;font-size:11px;color:#000;transform:scaleX(0.9659);">N036</span>
<span class="b" style="left:760.3px;top:458.7px;font-size:11px;color:#a9a7a9;transform:scaleX(1.0882);">Alertas Rede</span>
<span class="b" style="left:485.9px;top:495.2px;font-size:11px;color:#000;transform:scaleX(1.0787);">Taxa Crédito a Vista:</span>
<span class="b" style="left:485.9px;top:516.2px;font-size:11px;color:#000;transform:scaleX(1.0707);">Taxa Crédito Parc. 1:</span>
<span class="b" style="left:485.9px;top:537.2px;font-size:11px;color:#000;transform:scaleX(1.0707);">Taxa Crédito Parc. 2:</span>
<span class="b" style="left:485.9px;top:557.2px;font-size:11px;color:#000;transform:scaleX(1.0958);">Taxa no Débito (a.a.):</span>
<span class="b" style="left:485.9px;top:578.2px;font-size:11px;color:#000;transform:scaleX(1.0699);">Valor Transação:</span>
<span class="b" style="left:692.1px;top:495.0px;font-size:11px;color:#000;transform:scaleX(1.0699);">Alteração de Adquirência:</span>
<span class="b" style="left:681.0px;top:516.0px;font-size:11px;color:#000;transform:scaleX(1.0892);">Alteração Inicial:</span>
<span style="left:787.5px;top:516.2px;font-size:11px;color:#000;transform:scaleX(1.0588);">21/08/2019</span>
<span class="b" style="left:681.0px;top:537.0px;font-size:11px;color:#000;transform:scaleX(1.1003);">Última Alteração:</span>
<span class="b" style="left:681.0px;top:557.5px;font-size:11px;color:#000;transform:scaleX(1.0944);">Status:</span>
</body></html>
